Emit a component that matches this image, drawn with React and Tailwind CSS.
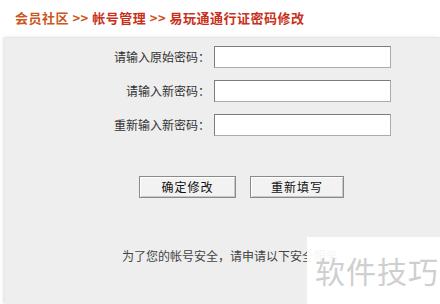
import React from "react";

const font = { fontFamily: '"SimSun", "Noto Sans CJK SC", sans-serif' };

const Field = ({ label }) => (
  <div className="flex items-center h-[22px]">
    <label className="w-[209px] pr-[4px] text-right text-[12px] text-[#333]">{label}</label>
    <input
      type="password"
      className="w-[177px] h-[22px] bg-white border border-[#a5acb5] border-t-[#7c7c7c] border-l-[#7c7c7c] outline-none"
    />
  </div>
);

const Btn = ({ children, w }) => (
  <button
    className={`${w} h-[22px] bg-[#f2f2f2] border border-[#8a8a8a] shadow-[inset_1px_1px_0_#fff,inset_-1px_-1px_0_#c8c8c8] text-[12px] text-[#111] tracking-[1px]`}
  >
    {children}
  </button>
);

export default function App() {
  return (
    <div className="w-[440px] h-[304px] bg-white overflow-hidden relative" style={font}>
      <div className="h-[37px] pl-[15px] pt-[8px] text-[13px] font-bold tracking-[0.5px] text-[#cc5520] whitespace-nowrap">
        会员社区 &gt;&gt; <span className="text-[#c8301a]">帐号管理</span> &gt;&gt;{" "}
        <span className="text-[#c8301a]">易玩通通行证密码修改</span>
      </div>
      <div className="ml-[5px] h-[267px] bg-[#eeeeee] shadow-[-2px_0_3px_#e4e4e4] border-t border-[#e6e6e6]">
        <div className="pt-[8px] flex flex-col gap-[12px]">
          <Field label="请输入原始密码：" />
          <Field label="请输入新密码：" />
          <Field label="重新输入新密码：" />
        </div>
        <div className="mt-[40px] flex pl-[134px] gap-[14px]">
          <Btn w="w-[97px]">确定修改</Btn>
          <Btn w="w-[94px]">重新填写</Btn>
        </div>
        <div className="mt-[49px] pl-[117px] text-[12px] text-[#444] whitespace-nowrap">
          为了您的帐号安全，请申请以下安全服务
        </div>
      </div>
      <div className="absolute left-[307px] top-[237px] w-[133px] h-[67px] bg-white/95 flex items-center pl-[8px] text-[30px] text-[#cfcfcf] tracking-[1px]"
        style={{ fontFamily: '"Noto Sans CJK SC", sans-serif' }}>
        软件技巧
      </div>
    </div>
  );
}
